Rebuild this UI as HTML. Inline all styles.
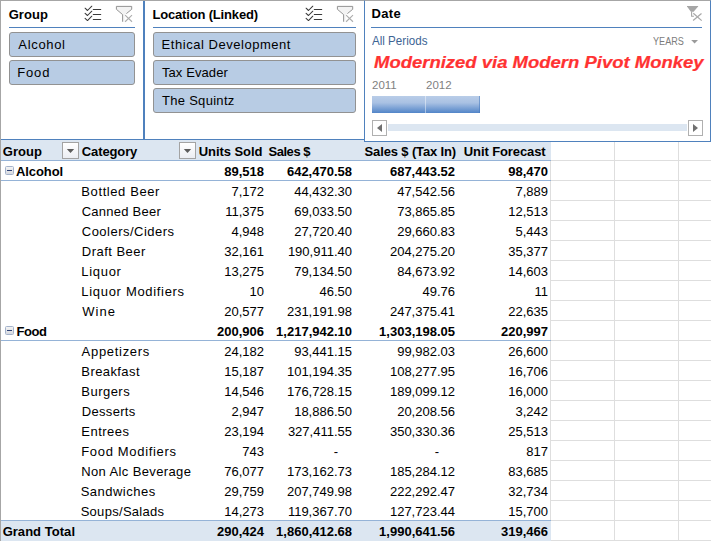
<!DOCTYPE html>
<html><head><meta charset="utf-8"><title>Pivot</title>
<style>
html,body{margin:0;padding:0;background:#fff;}
body{width:711px;height:541px;position:relative;overflow:hidden;font-family:"Liberation Sans",sans-serif;font-size:13px;color:#000;}
div,span,i,svg{position:absolute;box-sizing:border-box;}
span{white-space:nowrap;}
/* grid */
.gv{top:161px;width:1px;height:380px;background:#dedede;}
.gh{left:551px;width:160px;height:1px;background:#dedede;}
/* frame */
#topb{left:0;top:0;width:711px;height:1px;background:#a6a6a6;}
#leftb{left:0;top:0;width:1px;height:541px;background:#a6a6a6;}
#sl-bot{left:1px;top:139px;width:363px;height:1px;background:#4f81bd;}
#sl-mid{left:143px;top:1px;width:2px;height:138px;background:#4f81bd;}
/* slicers */
.sh{top:5px;height:20px;line-height:20px;font-weight:bold;font-size:13px;}
.ul{top:27px;height:1px;background:#4f81bd;}
.btn{height:25px;background:#b8cce4;border:1px solid #929292;border-radius:3px;}
.btn span{left:8px;top:0;height:23px;line-height:23px;font-size:13px;}
/* timeline */
#tl{z-index:5;left:364px;top:0;width:347px;height:142px;border:1px solid #4f81bd;border-top:1px solid #a6a6a6;background:#fff;}
/* table */
#hdr{left:1px;top:140px;width:550px;height:20px;background:#dce6f1;}
.hl{left:1px;width:550px;height:1px;background:#95b3d7;}
.r{left:0;width:551px;height:20px;line-height:20px;}
.r span{top:1px;height:20px;line-height:20px;}
.g,.t,.h{font-weight:bold;}
.t{background:#dce6f1;left:1px;width:550px;}
.c{right:287px;} .d{right:199px;} .e{right:96px;} .f{right:3px;}
.d.dash{right:213px;} .e.dash{right:112px;}
.bx{left:5px;top:5px;width:9px;height:9px;border:1px solid #a3b2cb;border-radius:1.5px;background:linear-gradient(#f4f4f4,#d6d9e0);}
.bx:after{content:"";position:absolute;left:1px;top:3px;width:5px;height:1px;background:#2b3f73;}
.dd{top:142px;width:17px;height:17px;border:1px solid #a3a3a3;background:linear-gradient(#ffffff,#eceef3);}
.dd svg{left:-1px;top:-1px;}
</style></head><body>
<!-- gridlines -->
<div class="gv" style="left:550px"></div><div class="gv" style="left:614px;top:142px;height:399px"></div><div class="gv" style="left:678px;top:142px;height:399px"></div>
<div class="gh" style="top:160px"></div><div class="gh" style="top:180px"></div><div class="gh" style="top:200px"></div><div class="gh" style="top:220px"></div><div class="gh" style="top:240px"></div><div class="gh" style="top:260px"></div><div class="gh" style="top:280px"></div><div class="gh" style="top:300px"></div><div class="gh" style="top:320px"></div><div class="gh" style="top:340px"></div><div class="gh" style="top:360px"></div><div class="gh" style="top:380px"></div><div class="gh" style="top:400px"></div><div class="gh" style="top:420px"></div><div class="gh" style="top:440px"></div><div class="gh" style="top:460px"></div><div class="gh" style="top:480px"></div><div class="gh" style="top:500px"></div><div class="gh" style="top:520px"></div><div class="gh" style="top:540px"></div>
<div id="sl-bot"></div><div id="sl-mid"></div>
<!-- slicer Group -->
<span class="sh" id="sg" style="left:8.63px;letter-spacing:0.089px">Group</span>
<div class="ul" style="left:9px;width:126px"></div>
<svg class="ms" style="left:84px;top:5px" width="19" height="17" viewBox="0 0 19 17"><g fill="none" stroke="#3a3a3a" stroke-width="1.05" stroke-linecap="round" stroke-linejoin="round"><path d="M1.1 3.2L3.5 5.5L7.8 1.2M1.1 8.3L3.5 10.5L7.8 6.2M1.1 13.3L3.5 15.55L7.8 11.2"/><path d="M9.3 4.5H16.7M9.3 9.5H16.7M9.3 14.5H16.7" stroke-width="1.1"/></g></svg>
<svg class="fi" style="left:115px;top:5px" width="19" height="18" viewBox="0 0 19 18"><path d="M1.4 1.4H16.7V4.3L9.6 10V16.7H7.6V9.6L1.4 4.3z" fill="#f3f3f3"/><path d="M11.4 8.6L16.7 4.3V1.4H1.4V4.3L7.6 9.6V16.75" fill="none" stroke="#8e8e8e" stroke-width="0.95"/><path d="M10.1 10.1L17 16.75M17 10.1L10.1 16.75" stroke="#adadad" stroke-width="1.1" fill="none"/></svg>
<div class="btn" style="left:9px;top:32px;width:126px"><span id="b1" style="left:8.32px;letter-spacing:0.676px">Alcohol</span></div>
<div class="btn" style="left:9px;top:60px;width:126px"><span id="b2" style="left:7.27px;letter-spacing:0.827px">Food</span></div>
<!-- slicer Location -->
<span class="sh" id="sl" style="left:152.41px;letter-spacing:-0.167px">Location (Linked)</span>
<div class="ul" style="left:153px;width:203px"></div>
<svg class="ms" style="left:305px;top:5px" width="19" height="17" viewBox="0 0 19 17"><g fill="none" stroke="#3a3a3a" stroke-width="1.05" stroke-linecap="round" stroke-linejoin="round"><path d="M1.1 3.2L3.5 5.5L7.8 1.2M1.1 8.3L3.5 10.5L7.8 6.2M1.1 13.3L3.5 15.55L7.8 11.2"/><path d="M9.3 4.5H16.7M9.3 9.5H16.7M9.3 14.5H16.7" stroke-width="1.1"/></g></svg>
<svg class="fi" style="left:336px;top:5px" width="19" height="18" viewBox="0 0 19 18"><path d="M1.4 1.4H16.7V4.3L9.6 10V16.7H7.6V9.6L1.4 4.3z" fill="#f3f3f3"/><path d="M11.4 8.6L16.7 4.3V1.4H1.4V4.3L7.6 9.6V16.75" fill="none" stroke="#8e8e8e" stroke-width="0.95"/><path d="M10.1 10.1L17 16.75M17 10.1L10.1 16.75" stroke="#adadad" stroke-width="1.1" fill="none"/></svg>
<div class="btn" style="left:153px;top:32px;width:203px"><span id="b3" style="left:7.62px;letter-spacing:0.533px">Ethical Development</span></div>
<div class="btn" style="left:153px;top:60px;width:203px"><span id="b4" style="left:7.94px;letter-spacing:0.096px">Tax Evader</span></div>
<div class="btn" style="left:153px;top:88px;width:203px"><span id="b5" style="left:7.94px;letter-spacing:0.298px">The Squintz</span></div>
<!-- timeline -->
<div id="tl">
<span style="left:6.5px;top:3px;height:20px;line-height:20px;font-weight:bold;font-size:13px;letter-spacing:.35px">Date</span>
<div class="ul" style="left:6px;top:26px;width:331px"></div>
<svg style="left:321px;top:5px" width="18" height="17" viewBox="0 0 18 17"><path d="M1 0H12.1V.5L7.6 5.8H4.9L1 .5z" fill="#a6a6a6"/><path d="M5.6 5.4V10.2H7.9" fill="none" stroke="#a6a6a6" stroke-width="1.1"/><path d="M7.3 7.3L15.7 14.6M15.5 7.6L7.1 14.4" stroke="#a9a9a9" stroke-width="1.25" fill="none"/></svg>
<span style="left:7px;top:32px;height:16px;line-height:16px;font-size:12.3px;color:#3d6494;transform-origin:0 50%;transform:scaleX(.943)">All Periods</span>
<span style="right:26.3px;top:34px;height:14px;line-height:14px;font-size:10px;color:#7c7c7c;transform-origin:100% 50%;transform:scaleX(.91)">YEARS</span>
<svg style="left:324px;top:36px" width="12" height="10" viewBox="0 0 12 10"><path d="M2.2 2.9H9L5.6 6.6z" fill="#9a9a9a"/></svg>
<span id="ttl" style="left:8.5px;top:52px;height:20px;line-height:20px;font-size:15.6px;font-weight:bold;font-style:italic;color:#ff3232;-webkit-text-stroke:.2px #ff3232;transform-origin:0 0;transform:scaleX(1.185)">Modernized via Modern Pivot Monkey</span>
<span style="left:7px;top:76px;height:16px;line-height:16px;font-size:11.5px;color:#7f7f7f">2011</span>
<span style="left:61px;top:76px;height:16px;line-height:16px;font-size:11.5px;color:#7f7f7f">2012</span>
<div style="left:7px;top:95px;width:108px;height:17px;background:linear-gradient(#b9cde8 0%,#a9c1e3 40%,#5285c8 100%);border-right:1px solid rgba(70,120,190,.55)"><i style="left:53px;top:0;width:1px;height:17px;background:rgba(255,255,255,.45)"></i></div>

<div style="left:23px;top:123px;width:299px;height:7px;background:#dce6f1"></div>
<div style="left:7px;top:119px;width:15px;height:16px;border:1px solid #b0b0b0;background:#fff"><i style="left:4px;top:3px;border-top:4px solid transparent;border-bottom:4px solid transparent;border-right:5px solid #707070"></i></div>
<div style="left:323px;top:119px;width:15px;height:16px;border:1px solid #b0b0b0;background:#fff"><i style="left:4px;top:3px;border-top:4px solid transparent;border-bottom:4px solid transparent;border-left:5px solid #707070"></i></div>
</div>
<!-- table -->
<div id="hdr"></div>
<div class="hl" style="top:160px"></div><div class="hl" style="top:180px"></div><div class="hl" style="top:340px"></div><div class="hl" style="top:520px"></div>
<div class="r h" style="top:141px"><span id="h1" style="left:2.72px;letter-spacing:0.076px">Group</span><span id="h2" style="left:81.80px;letter-spacing:-0.115px">Category</span><span id="h3" style="left:198.77px;letter-spacing:-0.068px">Units Sold</span><span id="h4" style="left:268.40px;letter-spacing:-0.436px">Sales $</span><span id="h5" style="left:364.56px;letter-spacing:-0.137px">Sales $ (Tax In)</span><span id="h6" style="left:463.77px;letter-spacing:-0.102px">Unit Forecast</span></div>
<i class="dd" style="left:62px"><svg width="17" height="17" viewBox="0 0 17 17"><path d="M4.8 7H12.2L8.5 10.9z" fill="#5c5c5c"/></svg></i><i class="dd" style="left:179px"><svg width="17" height="17" viewBox="0 0 17 17"><path d="M4.8 7H12.2L8.5 10.9z" fill="#5c5c5c"/></svg></i>
<div class="r g" style="top:161px"><i class="bx"></i><span id="r161" style="left:15.90px;letter-spacing:-0.075px">Alcohol</span><span class="c">89,518</span><span class="d">642,470.58</span><span class="e">687,443.52</span><span class="f">98,470</span></div>
<div class="r" style="top:181px"><span id="r181" style="left:81.36px;letter-spacing:0.586px">Bottled Beer</span><span class="c">7,172</span><span class="d">44,432.30</span><span class="e">47,542.56</span><span class="f">7,889</span></div>
<div class="r" style="top:201px"><span id="r201" style="left:81.67px;letter-spacing:0.257px">Canned Beer</span><span class="c">11,375</span><span class="d">69,033.50</span><span class="e">73,865.85</span><span class="f">12,513</span></div>
<div class="r" style="top:221px"><span id="r221" style="left:81.81px;letter-spacing:0.476px">Coolers/Ciders</span><span class="c">4,948</span><span class="d">27,720.40</span><span class="e">29,660.83</span><span class="f">5,443</span></div>
<div class="r" style="top:241px"><span id="r241" style="left:81.86px;letter-spacing:0.466px">Draft Beer</span><span class="c">32,161</span><span class="d">190,911.40</span><span class="e">204,275.20</span><span class="f">35,377</span></div>
<div class="r" style="top:261px"><span id="r261" style="left:81.36px;letter-spacing:0.679px">Liquor</span><span class="c">13,275</span><span class="d">79,134.50</span><span class="e">84,673.92</span><span class="f">14,603</span></div>
<div class="r" style="top:281px"><span id="r281" style="left:81.36px;letter-spacing:0.684px">Liquor Modifiers</span><span class="c">10</span><span class="d">46.50</span><span class="e">49.76</span><span class="f">11</span></div>
<div class="r" style="top:301px"><span id="r301" style="left:82.31px;letter-spacing:0.994px">Wine</span><span class="c">20,577</span><span class="d">231,191.98</span><span class="e">247,375.41</span><span class="f">22,635</span></div>
<div class="r g" style="top:321px"><i class="bx"></i><span id="r321" style="left:16.52px;letter-spacing:-0.423px">Food</span><span class="c">200,906</span><span class="d">1,217,942.10</span><span class="e">1,303,198.05</span><span class="f">220,997</span></div>
<div class="r" style="top:341px"><span id="r341" style="left:81.60px;letter-spacing:0.697px">Appetizers</span><span class="c">24,182</span><span class="d">93,441.15</span><span class="e">99,982.03</span><span class="f">26,600</span></div>
<div class="r" style="top:361px"><span id="r361" style="left:81.36px;letter-spacing:0.405px">Breakfast</span><span class="c">15,187</span><span class="d">101,194.35</span><span class="e">108,277.95</span><span class="f">16,706</span></div>
<div class="r" style="top:381px"><span id="r381" style="left:81.36px;letter-spacing:0.465px">Burgers</span><span class="c">14,546</span><span class="d">176,728.15</span><span class="e">189,099.12</span><span class="f">16,000</span></div>
<div class="r" style="top:401px"><span id="r401" style="left:81.86px;letter-spacing:0.299px">Desserts</span><span class="c">2,947</span><span class="d">18,886.50</span><span class="e">20,208.56</span><span class="f">3,242</span></div>
<div class="r" style="top:421px"><span id="r421" style="left:81.26px;letter-spacing:0.488px">Entrees</span><span class="c">23,194</span><span class="d">327,411.55</span><span class="e">350,330.36</span><span class="f">25,513</span></div>
<div class="r" style="top:441px"><span id="r441" style="left:81.26px;letter-spacing:0.674px">Food Modifiers</span><span class="c">743</span><span class="d dash">-</span><span class="e dash">-</span><span class="f">817</span></div>
<div class="r" style="top:461px"><span id="r461" style="left:81.26px;letter-spacing:0.373px">Non Alc Beverage</span><span class="c">76,077</span><span class="d">173,162.73</span><span class="e">185,284.12</span><span class="f">83,685</span></div>
<div class="r" style="top:481px"><span id="r481" style="left:80.64px;letter-spacing:0.492px">Sandwiches</span><span class="c">29,759</span><span class="d">207,749.98</span><span class="e">222,292.47</span><span class="f">32,734</span></div>
<div class="r" style="top:501px"><span id="r501" style="left:80.64px;letter-spacing:0.297px">Soups/Salads</span><span class="c">14,273</span><span class="d">119,367.70</span><span class="e">127,723.44</span><span class="f">15,700</span></div>
<div class="r t" style="top:521px"><span id="r521" style="left:1.64px;letter-spacing:0.038px">Grand Total</span><span class="c">290,424</span><span class="d">1,860,412.68</span><span class="e">1,990,641.56</span><span class="f">319,466</span></div>
<div id="leftb"></div><div id="topb"></div>
</body></html>
